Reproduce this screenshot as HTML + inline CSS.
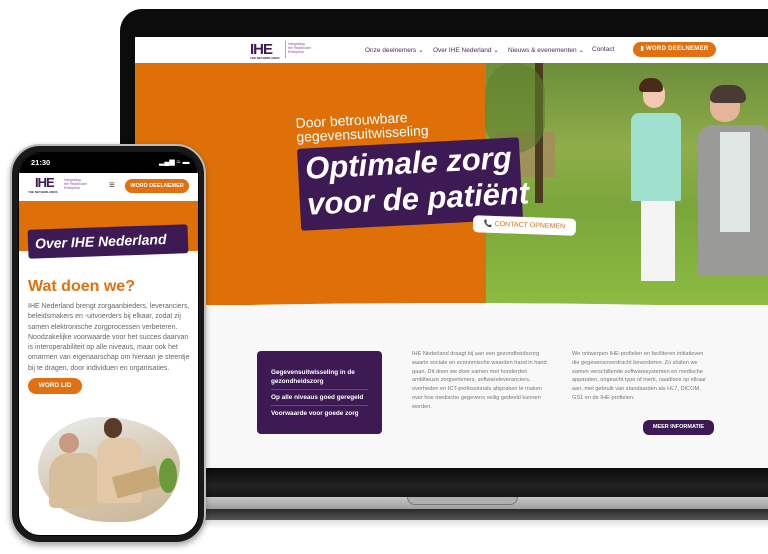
<!DOCTYPE html>
<html><head><meta charset="utf-8"><style>
*{margin:0;padding:0;box-sizing:border-box}
body{width:768px;height:554px;background:#fff;position:relative;overflow:hidden;font-family:"Liberation Sans Narrow","Liberation Sans",sans-serif}
.a{position:absolute}
.nav{font-size:6.5px;color:#4a2a5a}
.btn{background:#e07010;color:#fff;font-weight:bold;border-radius:8px;text-align:center;white-space:nowrap}
</style></head><body>
<!-- laptop -->
<div class="a" style="left:120px;top:9px;width:680px;height:470px;background:#0c0c0c;border-radius:22px"></div>
<div class="a" style="left:120px;top:468px;width:660px;height:30px;background:linear-gradient(#0a0a0a,#222 60%,#161616)"></div>
<div class="a" style="left:110px;top:497px;width:670px;height:13px;background:linear-gradient(#c9c9c9,#9a9a9a)"></div>
<div class="a" style="left:110px;top:509px;width:670px;height:11px;background:linear-gradient(#2a2a2a,#555);border-radius:0 0 8px 8px"></div>
<div class="a" style="left:407px;top:497px;width:111px;height:8px;background:#b0b0b0;border-radius:0 0 10px 10px;border:1px solid #777;border-top:none"></div>
<div class="a" style="left:110px;top:520px;width:670px;height:8px;background:linear-gradient(#ddd,#fff)"></div>
<!-- screen -->
<div class="a" style="left:135px;top:37px;width:633px;height:431px;background:#f8f8f8;overflow:hidden">
 <div class="a" style="left:0;top:0;width:633px;height:26px;background:#fff"></div>
 <div class="a" style="left:115px;top:4px;font-size:15px;font-weight:bold;color:#3f1a52;letter-spacing:-1px">IHE</div>
 <div class="a" style="left:115px;top:19px;font-size:3px;color:#3f1a52;font-weight:bold">THE NETHERLANDS</div>
 <div class="a" style="left:150px;top:4px;width:1px;height:17px;background:#aaa"></div>
 <div class="a" style="left:153px;top:5px;font-size:3.5px;color:#8a4aa0;line-height:4px">Integrating<br>the Healthcare<br>Enterprise</div>
 <div class="a nav" style="left:230px;top:9px">Onze deelnemers ⌄</div>
 <div class="a nav" style="left:298px;top:9px">Over IHE Nederland ⌄</div>
 <div class="a nav" style="left:373px;top:9px">Nieuws &amp; evenementen ⌄</div>
 <div class="a nav" style="left:457px;top:9px">Contact</div>
 <div class="a btn" style="left:498px;top:5px;width:83px;height:15px;font-size:6px;line-height:15px;letter-spacing:.3px">▮ WORD DEELNEMER</div>
 <div class="a" style="left:0;top:26px;width:351px;height:242px;background:#df7008"></div>
 <div class="a" style="left:351px;top:26px;width:282px;height:242px;background:linear-gradient(180deg,#6c8d3a 0%,#8fae4a 35%,#7aa63a 60%,#8cbc42 100%)"></div>
 <div class="a" style="left:360px;top:95px;width:60px;height:45px;background:#a88660;opacity:.7"></div>
 <div class="a" style="left:400px;top:26px;width:8px;height:140px;background:#4a3a20"></div>
 <div class="a" style="left:350px;top:26px;width:60px;height:90px;background:#5f7e2c;opacity:.6;border-radius:30px"></div>
 <!-- nurse -->
 <div class="a" style="left:508px;top:45px;width:22px;height:26px;background:#f2c9b0;border-radius:11px"></div>
 <div class="a" style="left:504px;top:41px;width:24px;height:14px;background:#4a2a18;border-radius:12px 12px 4px 4px"></div>
 <div class="a" style="left:496px;top:76px;width:50px;height:88px;background:#9fe0cf;border-radius:8px 8px 2px 2px"></div>
 <div class="a" style="left:506px;top:164px;width:34px;height:80px;background:#f4f4f4"></div>
 <!-- old woman -->
 <div class="a" style="left:575px;top:53px;width:30px;height:32px;background:#e4b59a;border-radius:14px"></div>
 <div class="a" style="left:575px;top:48px;width:36px;height:18px;background:#4a3a34;border-radius:16px 16px 6px 6px"></div>
 <div class="a" style="left:563px;top:88px;width:70px;height:150px;background:#9a9a98;border-radius:14px 10px 0 0"></div>
 <div class="a" style="left:585px;top:95px;width:30px;height:100px;background:#dfe6e4"></div>
 <div class="a" style="left:-20px;top:266px;width:673px;height:10px;background:#f8f8f8;border-radius:50% 50% 0 0/100% 100% 0 0"></div>
 <!-- hero text -->
 <div class="a" style="left:161px;top:79px;color:#fff;font-size:14px;line-height:14px;transform:rotate(-3deg);transform-origin:left">Door betrouwbare<br>gegevensuitwisseling</div>
 <div class="a" style="left:164px;top:106px;width:222px;height:82px;background:#3e1a55;transform:rotate(-3deg);border-radius:3px"></div>
 <div class="a" style="left:171px;top:108px;color:#fff;font-size:31px;font-weight:bold;font-style:italic;line-height:36px;transform:rotate(-3deg)">Optimale zorg<br>voor de patiënt</div>
 <div class="a" style="left:338px;top:180px;width:103px;height:17px;background:#fff;border-radius:5px;color:#e07010;font-size:7px;line-height:17px;text-align:center;transform:rotate(2deg)">📞 CONTACT OPNEMEN</div>
 <!-- bottom -->
 <div class="a" style="left:122px;top:314px;width:125px;height:83px;background:#3e1a55;border-radius:4px;color:#fff;font-size:6.4px;font-weight:bold;padding:17px 14px;line-height:9px">Gegevensuitwisseling in de<br>gezondheidszorg<div style="border-top:1px solid #6a4a7a;margin:3px 0;padding-top:3px">Op alle niveaus goed geregeld</div><div style="border-top:1px solid #6a4a7a;padding-top:3px">Voorwaarde voor goede zorg</div></div>
 <div class="a" style="left:277px;top:313px;width:135px;font-size:5.6px;line-height:8.8px;color:#777">IHE Nederland draagt bij aan een gezondheidszorg waarin sociale en economische waarden hand in hand gaan. Dit doen we door samen met honderden ambitieuze zorgverleners, softwareleveranciers, overheden en ICT-professionals afspraken te maken over hoe medische gegevens veilig gedeeld kunnen worden.</div>
 <div class="a" style="left:437px;top:313px;width:140px;font-size:5.6px;line-height:8.8px;color:#777">We ontwerpen IHE-profielen en faciliteren initiatieven die gegevensoverdracht bevorderen. Zo sluiten we samen verschillende softwaresystemen en medische apparaten, ongeacht type of merk, naadloos op elkaar aan, met gebruik van standaarden als HL7, DICOM, GS1 en de IHE-profielen.</div>
 <div class="a" style="left:508px;top:383px;width:71px;height:15px;background:#3e1a55;color:#fff;border-radius:6px;font-size:5.5px;font-weight:bold;line-height:15px;text-align:center">MEER INFORMATIE</div>
</div>
<!-- phone -->
<div class="a" style="left:10px;top:144px;width:196px;height:400px;background:#1a1a1a;border-radius:30px;border:2px solid #bbb;box-shadow:0 2px 6px rgba(0,0,0,.3)"></div>
<div class="a" style="left:18px;top:152px;width:181px;height:384px;background:#fff;border-radius:22px;overflow:hidden;border:1px solid #000">
 <div class="a" style="left:0;top:0;width:181px;height:20px;background:#000"></div>
 <div class="a" style="left:12px;top:5px;color:#fff;font-size:7.5px;font-family:'Liberation Sans';font-weight:bold">21:30</div>
 <div class="a" style="left:140px;top:5px;color:#fff;font-size:7px">▂▄▆ ≈ ▬</div>
 <div class="a" style="left:0;top:20px;width:181px;height:28px;background:#fff"></div>
 <div class="a" style="left:16px;top:22px;font-size:13px;font-weight:bold;color:#3f1a52;letter-spacing:-1px">IHE</div>
 <div class="a" style="left:9px;top:37px;font-size:3px;color:#3f1a52;font-weight:bold">THE NETHERLANDS</div>
 <div class="a" style="left:45px;top:25px;font-size:3.5px;color:#8a4aa0;line-height:4px">Integrating<br>the Healthcare<br>Enterprise</div>
 <div class="a" style="left:90px;top:27px;font-size:10px;color:#444">≡</div>
 <div class="a btn" style="left:106px;top:26px;width:64px;height:14px;font-size:5.5px;line-height:14px">WORD DEELNEMER</div>
 <div class="a" style="left:0;top:48px;width:181px;height:50px;background:#df7008"></div>
 <div class="a" style="left:9px;top:74px;width:160px;height:29px;background:#3e1a55;transform:rotate(-2deg);border-radius:3px;color:#fff;font-size:14px;font-weight:bold;font-style:italic;line-height:29px;padding-left:7px">Over IHE Nederland</div>
 <div class="a" style="left:9px;top:125px;color:#e07010;font-size:16px;font-weight:bold">Wat doen we?</div>
 <div class="a" style="left:9px;top:149px;width:166px;font-size:7px;line-height:10.3px;color:#666">IHE Nederland brengt zorgaanbieders, leveranciers, beleidsmakers en -uitvoerders bij elkaar, zodat zij samen elektronische zorgprocessen verbeteren. Noodzakelijke voorwaarde voor het succes daarvan is interoperabiliteit op alle niveaus, maar ook het omarmen van eigenaarschap om hieraan je steentje bij te dragen, door individuen en organisaties.</div>
 <div class="a btn" style="left:9px;top:225px;width:54px;height:16px;font-size:6.5px;line-height:16px">WORD LID</div>
 <div class="a" style="left:19px;top:264px;width:142px;height:105px;background:linear-gradient(160deg,#e8eef0,#d8c8b0 55%,#c9b596);border-radius:45% 55% 40% 50%/50% 45% 55% 50%"></div>
 <div class="a" style="left:30px;top:300px;width:50px;height:55px;background:#d8bf9c;border-radius:20px 15px 5px 5px"></div>
 <div class="a" style="left:78px;top:285px;width:45px;height:65px;background:#e2c8a6;border-radius:15px 15px 5px 5px"></div>
 <div class="a" style="left:95px;top:318px;width:45px;height:22px;background:#c9a878;transform:rotate(-15deg)"></div>
 <div class="a" style="left:40px;top:280px;width:20px;height:20px;background:#c89a80;border-radius:10px"></div>
 <div class="a" style="left:85px;top:265px;width:18px;height:20px;background:#5a3a28;border-radius:9px"></div>
 <div class="a" style="left:140px;top:305px;width:18px;height:35px;background:#6a9a3a;border-radius:50%"></div>
</div>
</body></html>
